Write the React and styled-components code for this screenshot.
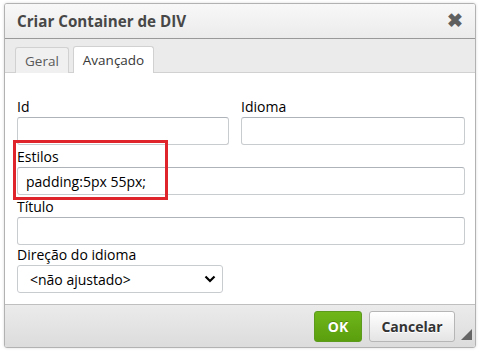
import React from 'react';
import styled, { createGlobalStyle } from 'styled-components';

const GlobalStyle = createGlobalStyle`
  html, body {
    margin: 0;
    padding: 0;
    background: #fff;
  }
  body {
    font-family: "Open Sans", "Liberation Sans", sans-serif;
  }
`;

const Page = styled.div`
  width: 480px;
  height: 351px;
  padding: 3px 4px 0 4px;
  box-sizing: border-box;
  background: #fff;
`;

const Dialog = styled.div`
  width: 472px;
  height: 345px;
  box-sizing: border-box;
  border: 1px solid #b2b2b2;
  border-radius: 3px;
  box-shadow: 0 0 3px rgba(0, 0, 0, 0.15);
  display: flex;
  flex-direction: column;
  overflow: hidden;
  background: #fff;
`;

const TitleBar = styled.div`
  height: 34px;
  flex: none;
  display: flex;
  align-items: center;
  justify-content: space-between;
  padding: 0 12px 0 12px;
  background: linear-gradient(to bottom, #f8f8f8, #ebebeb);
  border-bottom: 1px solid #999;
  font-weight: 700;
  font-size: 15.2px;
  color: #474747;
`;

const Close = styled.span`
  font-size: 19px;
  font-weight: 700;
  color: #5f5f5f;
  line-height: 1;
  margin-top: -2px;
`;

const TabStrip = styled.div`
  height: 33px;
  flex: none;
  display: flex;
  align-items: flex-end;
  gap: 4px;
  padding: 0 10px;
  background: #ebebeb;
  border-bottom: 1px solid #d1d1d1;
`;

const Tab = styled.div`
  padding: 0 9px;
  display: flex;
  align-items: center;
  font-size: 13.5px;
  border: 1px solid #d1d1d1;
  border-bottom: none;
  border-radius: 3px 3px 0 0;
  margin-bottom: -1px;
  box-sizing: border-box;
  background: ${p => (p.active ? '#fff' : '#f0f0f0')};
  height: ${p => (p.active ? '27px' : '26px')};
  color: ${p => (p.active ? '#383838' : '#595959')};
`;

const Body = styled.div`
  flex: 1;
  padding: 25px 10px 0 12px;
  display: flex;
  flex-direction: column;
  background: #fff;
`;

const Row = styled.div`
  display: grid;
  grid-template-columns: 212px 224px;
  gap: 12px;
`;

const Field = styled.div`
  position: relative;
  display: flex;
  flex-direction: column;
  margin-top: ${p => p.top || 0}px;
`;

const Label = styled.label`
  font-size: 14px;
  color: #000;
  line-height: 17px;
  height: 17px;
  margin-bottom: ${p => p.gap || 2}px;
`;

const Input = styled.div`
  height: 28px;
  width: 100%;
  box-sizing: border-box;
  border: 1px solid #c9cccf;
  border-top-color: #aeb3b9;
  border-radius: 3px;
  background: #fff;
  padding: 0 8px;
  display: flex;
  align-items: center;
  font-size: 14px;
  color: #000;
`;

const Select = styled.div`
  height: 28px;
  width: 206px;
  box-sizing: border-box;
  border: 1px solid #c9cccf;
  border-radius: 3px;
  background: #fff;
  padding: 0 6px 0 12px;
  display: flex;
  align-items: center;
  justify-content: space-between;
  font-size: 14px;
  color: #000;
`;

const Highlight = styled.div`
  position: absolute;
  left: -4px;
  top: -8px;
  width: 155px;
  height: 60px;
  box-sizing: border-box;
  border: 3px solid #e0242b;
  pointer-events: none;
`;

const Footer = styled.div`
  height: 42px;
  flex: none;
  display: flex;
  align-items: center;
  justify-content: flex-end;
  gap: 7px;
  padding: 0 20px 0 0;
  position: relative;
  background: linear-gradient(to bottom, #ebebeb, #dcdcdc);
  border-top: 1px solid #bfbfbf;
`;

const Button = styled.div`
  height: 31px;
  width: ${p => p.w}px;
  box-sizing: border-box;
  display: flex;
  align-items: center;
  justify-content: center;
  border-radius: 3px;
  font-size: 14px;
  font-weight: 700;
  color: ${p => (p.primary ? '#fff' : '#333')};
  border: 1px solid ${p => (p.primary ? '#5b9a1d' : '#b6b6b6')};
  background: ${p =>
    p.primary
      ? 'linear-gradient(to bottom, #6fb61a, #5a9e0e)'
      : 'linear-gradient(to bottom, #fff, #e4e4e4)'};
  text-shadow: ${p => (p.primary ? '0 -1px 0 #55830c' : '0 1px 0 #fff')};
`;

const Grip = styled.svg`
  position: absolute;
  right: 3px;
  bottom: 7px;
`;

export default function App() {
  return (
    <Page>
      <GlobalStyle />
      <Dialog>
        <TitleBar>
          <span>Criar Container de DIV</span>
          <Close>✖</Close>
        </TitleBar>
        <TabStrip>
          <Tab>Geral</Tab>
          <Tab active>Avançado</Tab>
        </TabStrip>
        <Body>
          <Row>
            <Field>
              <Label>Id</Label>
              <Input />
            </Field>
            <Field>
              <Label>Idioma</Label>
              <Input />
            </Field>
          </Row>
          <Field top={3}>
            <Label>Estilos</Label>
            <Input>padding:5px 55px;</Input>
            <Highlight />
          </Field>
          <Field top={3}>
            <Label>Título</Label>
            <Input />
          </Field>
          <Field top={1}>
            <Label>Direção do idioma</Label>
            <Select>
              <span>&lt;não ajustado&gt;</span>
              <svg width="12" height="8" viewBox="0 0 12 8">
                <path d="M1.5 1.5 L6 6 L10.5 1.5" fill="none" stroke="#000" strokeWidth="2.2" />
              </svg>
            </Select>
          </Field>
        </Body>
        <Footer>
          <Button primary w={48}>OK</Button>
          <Button w={86}>Cancelar</Button>
          <Grip width="11" height="11" viewBox="0 0 11 11">
            <polygon points="11,0 11,11 0,11" fill="#666" />
          </Grip>
        </Footer>
      </Dialog>
    </Page>
  );
}
